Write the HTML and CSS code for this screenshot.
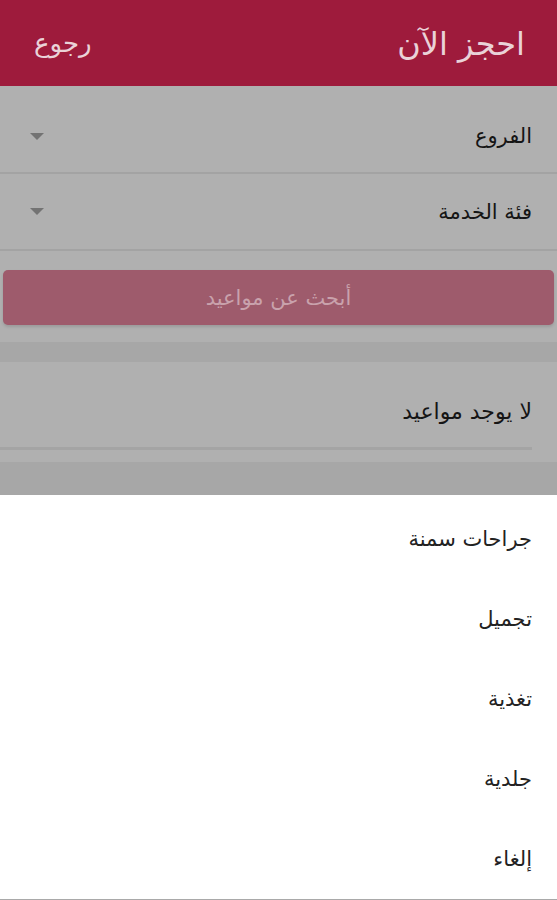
FILE: index.html
```html
<!DOCTYPE html>
<html lang="ar" dir="rtl">
<head>
<meta charset="utf-8">
<title>احجز الآن</title>
<link rel="stylesheet" href="styles.css">
</head>
<body>
<div class="screen">
  <header class="appbar">
    <div class="title">احجز الآن</div>
    <div class="back">رجوع</div>
  </header>
  <section class="form">
    <div class="field field-first">
      <span class="field-label">الفروع</span>
      <span class="caret"></span>
    </div>
    <div class="field field-second">
      <span class="field-label">فئة الخدمة</span>
      <span class="caret"></span>
    </div>
    <div class="btn-wrap">
      <div class="btn">أبحث عن مواعيد</div>
    </div>
  </section>
  <section class="list">
    <div class="card">
      <div class="card-row">لا يوجد مواعيد</div>
    </div>
  </section>
  <section class="sheet">
    <div class="sheet-item">جراحات سمنة</div>
    <div class="sheet-item">تجميل</div>
    <div class="sheet-item">تغذية</div>
    <div class="sheet-item">جلدية</div>
    <div class="sheet-item">إلغاء</div>
  </section>
</div>
</body>
</html>
```

FILE: styles.css
```css
html, body {
  margin: 0;
  padding: 0;
}
body {
  width: 557px;
  height: 900px;
  overflow: hidden;
  background: #ffffff;
  font-family: "DejaVu Sans", sans-serif;
  direction: rtl;
}
.screen {
  display: flex;
  flex-direction: column;
  height: 900px;
}
.appbar {
  height: 86px;
  flex: none;
  background: #9e1b3c;
  display: flex;
  align-items: center;
  justify-content: space-between;
  padding: 0 32px 0 34px;
  box-sizing: border-box;
  color: #ead2d8;
}
.title {
  font-size: 32px;
  line-height: 1;
  margin-top: 2px;
}
.back {
  font-size: 26px;
  line-height: 1;
  margin-top: 0;
}
.form {
  background: #b0b0b0;
  flex: none;
}
.field {
  display: flex;
  align-items: center;
  justify-content: space-between;
  padding: 0 25px 0 30px;
  box-sizing: border-box;
  border-bottom: 2px solid #a3a3a3;
  color: #151515;
  font-size: 21px;
}
.field-first {
  height: 88px;
  padding-top: 14px;
}
.field-second {
  height: 77px;
}
.caret {
  width: 0;
  height: 0;
  border-left: 7px solid transparent;
  border-right: 7px solid transparent;
  border-top: 7px solid #737373;
}
.btn-wrap {
  padding: 19px 3px 17px;
}
.btn {
  height: 55px;
  border-radius: 5px;
  background: #9e5b6c;
  color: #c9a2ac;
  font-size: 21px;
  display: flex;
  align-items: center;
  justify-content: center;
  box-shadow: 0 2px 3px rgba(0, 0, 0, 0.12);
}
.list {
  background: #a7a7a7;
  padding: 20px 0 33px;
  flex: none;
}
.card {
  background: #b0b0b0;
  height: 100px;
  box-sizing: border-box;
  padding-left: 0;
  padding-right: 25px;
}
.card-row {
  height: 88px;
  box-sizing: border-box;
  padding-top: 36px;
  line-height: 28px;
  font-size: 22px;
  color: #151515;
  border-bottom: 3px solid #a4a4a4;
}
.sheet {
  flex: 1;
  background: #ffffff;
  padding-top: 4px;
  border-bottom: 3px solid #a9a9a9;
  box-sizing: border-box;
}
.sheet-item {
  height: 80px;
  display: flex;
  align-items: center;
  padding-right: 25px;
  font-size: 21px;
  color: #222222;
}
```
